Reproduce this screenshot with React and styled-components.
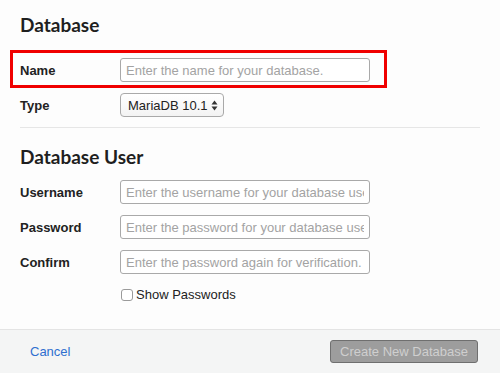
import styled, { createGlobalStyle } from 'styled-components';

const GlobalStyle = createGlobalStyle`
	html, body {
		margin: 0;
		padding: 0;
		background: #fdfdfd;
	}
	body {
		font-family: 'Liberation Sans', Arial, sans-serif;
	}
`;

const Dialog = styled.div`
	width: 500px;
	height: 373px;
	display: flex;
	flex-direction: column;
	background: #fdfdfd;
	overflow: hidden;
`;

const Body = styled.div`
	flex: 1;
	padding: 13px 20px 0;
`;

const Heading = styled.h2`
	margin: 0;
	font-family: Lato, 'Open Sans', sans-serif;
	font-weight: 700;
	font-size: 19px;
	line-height: 24px;
	color: #1f1f1f;
	margin-top: ${(props) => props.top || 0}px;
`;

const Row = styled.div`
	display: flex;
	align-items: center;
	height: 24px;
	margin-top: ${(props) => props.top || 0}px;
`;

const HighlightRow = styled(Row)`
	height: auto;
	margin-left: -10px;
	width: 357px;
	border: 3px solid #f00000;
	padding: 5px 7px 3px 7px;
`;

const Label = styled.label`
	width: 100px;
	font-size: 13px;
	font-weight: bold;
	color: #222;
`;

const Input = styled.input`
	box-sizing: border-box;
	width: 250px;
	height: 24px;
	padding: 0 5px;
	border: 1px solid #a9a9a9;
	border-radius: 3px;
	background: #fff;
	font-family: 'Liberation Sans', Arial, sans-serif;
	font-size: 13px;
	color: #333;
	outline: none;

	&::placeholder {
		color: #a3a3a3;
	}
`;

const Select = styled.div`
	box-sizing: border-box;
	width: 104px;
	height: 24px;
	display: flex;
	align-items: center;
	justify-content: space-between;
	padding: 0 5px 0 7px;
	border: 1px solid #a9a9a9;
	border-radius: 4px;
	background: linear-gradient(#ffffff, #f3f3f3);
	font-size: 13px;
	color: #222;
`;

const Divider = styled.hr`
	margin: 10px 0 0;
	border: none;
	border-top: 1px solid #e6e6e6;
`;

const CheckRow = styled.label`
	display: flex;
	align-items: center;
	gap: 3px;
	margin: 13px 0 0 101px;
	font-size: 13px;
	color: #222;
`;

const Box = styled.span`
	box-sizing: border-box;
	width: 12px;
	height: 12px;
	border: 1px solid #9a9a9a;
	border-radius: 3px;
	background: #fff;
`;

const Footer = styled.div`
	height: 43px;
	display: flex;
	align-items: center;
	justify-content: space-between;
	padding: 0 22px 0 30px;
	border-top: 1px solid #e4e4e4;
	background: #f4f5f5;
`;

const CancelLink = styled.a`
	font-size: 13px;
	color: #2f6fcf;
	text-decoration: none;
	cursor: pointer;
`;

const CreateButton = styled.button`
	box-sizing: border-box;
	width: 148px;
	height: 23px;
	border: 1px solid #6f6f6f;
	border-radius: 3px;
	background: #9d9d9d;
	font-family: 'Liberation Sans', Arial, sans-serif;
	font-size: 13px;
	color: #cfcfcf;
	padding: 0;
`;

const Arrows = () => (
	<svg width="7" height="11" viewBox="0 0 7 11">
		<path d="M3.5 0.5 L6.5 4.5 L0.5 4.5 Z" fill="#333" />
		<path d="M3.5 10.5 L6.5 6.5 L0.5 6.5 Z" fill="#333" />
	</svg>
);

const App = () => {
	return (
		<Dialog>
			<GlobalStyle />
			<Body>
				<Heading>Database</Heading>
				<HighlightRow top={13}>
					<Label>Name</Label>
					<Input placeholder="Enter the name for your database." />
				</HighlightRow>
				<Row top={5}>
					<Label>Type</Label>
					<Select>
						<span>MariaDB 10.1</span>
						<Arrows />
					</Select>
				</Row>
				<Divider />
				<Heading top={17}>Database User</Heading>
				<Row top={11}>
					<Label>Username</Label>
					<Input placeholder="Enter the username for your database user." />
				</Row>
				<Row top={11}>
					<Label>Password</Label>
					<Input placeholder="Enter the password for your database user." />
				</Row>
				<Row top={11}>
					<Label>Confirm</Label>
					<Input placeholder="Enter the password again for verification." />
				</Row>
				<CheckRow>
					<Box />
					Show Passwords
				</CheckRow>
			</Body>
			<Footer>
				<CancelLink>Cancel</CancelLink>
				<CreateButton disabled>Create New Database</CreateButton>
			</Footer>
		</Dialog>
	);
};

export default App;
